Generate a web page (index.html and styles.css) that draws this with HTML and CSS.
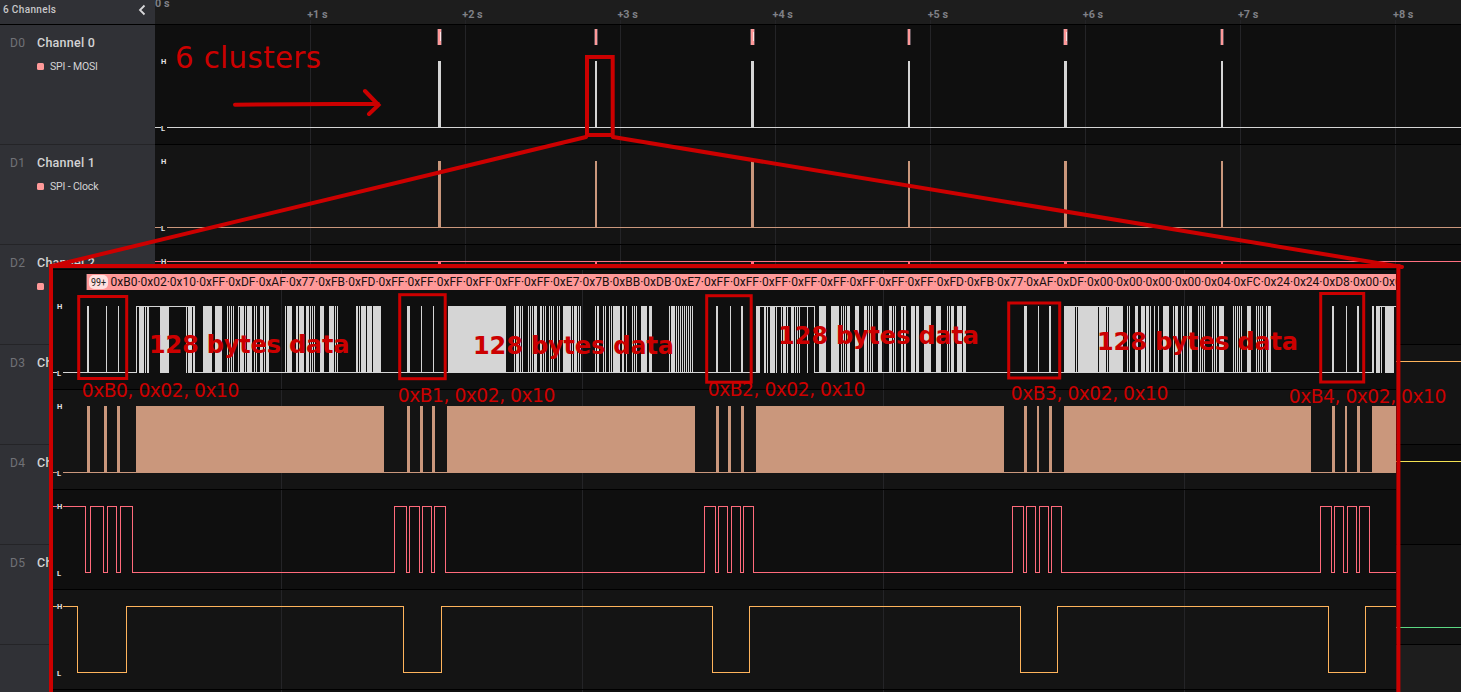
FILE: index.html
```html
<!DOCTYPE html>
<html lang="en">
<head>
<meta charset="utf-8">
<title>Logic capture</title>
<link rel="stylesheet" href="styles.css">
</head>
<body>
<div class="app">
  <aside class="sidebar">
    <header class="side-head"><span>6 Channels</span>
      <svg class="chevron" viewBox="0 0 8 12"><path d="M6.500 1.500 2 6l4.500 4.500"/></svg>
    </header>
    <section class="channel tall"><span class="id">D0</span><div><h2>Channel 0</h2><p><i></i>SPI - MOSI</p></div></section>
    <section class="channel"><span class="id">D1</span><div><h2>Channel 1</h2><p><i></i>SPI - Clock</p></div></section>
    <section class="channel"><span class="id">D2</span><div><h2>Channel 2</h2><p><i></i></p></div></section>
    <section class="channel"><span class="id">D3</span><div><h2>Channel 3</h2></div></section>
    <section class="channel"><span class="id">D4</span><div><h2>Channel 4</h2></div></section>
    <section class="channel"><span class="id">D5</span><div><h2>Channel 5</h2></div></section>
  </aside>
  <main class="plot">
    <div class="ruler"></div>
    <div class="lane tall"></div>
    <div class="lane alt"></div>
    <div class="lane"></div>
    <div class="lane alt"></div>
    <div class="lane"></div>
    <div class="lane alt"></div>
  </main>
  <svg class="overlay" viewBox="0 0 1461 692">
    <g id="overview"></g>
    <g id="inset">
      <rect class="dark" x="53" y="268" width="1343" height="424"/>
      <path class="light" d="M53 390H1396V489H53ZM53 590H1396V689H53Z"/>
      <path class="rule" d="M53 269.500H1396M53 389.500H1396M53 489.500H1396M53 589.500H1396M53 689.500H1396"/>
      <g id="insetGrid"></g>
      <rect class="tag" x="87" y="274" width="1309" height="16"/>
      <path class="tag-edge" d="M86.500 274V290"/>
      <rect class="count-bg" x="89" y="275" width="19" height="14" rx="5"/>
      <text class="count" x="91" y="285.500" textLength="15" lengthAdjust="spacingAndGlyphs">99+</text>
      <svg x="88" y="270" width="1308" height="24" viewBox="88 270 1308 24"><text class="bytes" id="bytes" x="110.500" y="286"></text></svg>
      <g id="signals"></g>
      <path class="enable" d="M53 506.500H85.500V572.500H90.500V506.500H103.500V572.500H107.500V506.500H116.500V572.500H120.500V506.500H132.500V572.500H394.500V506.500H406.500V572.500H409.500V506.500H419.500V572.500H422.500V506.500H431.500V572.500H434.500V506.500H445.500V572.500H704.500V506.500H715.500V572.500H718.500V506.500H727.500V572.500H731.500V506.500H740.500V572.500H743.500V506.500H753.500V572.500H1012.500V506.500H1023.500V572.500H1026.500V506.500H1035.500V572.500H1039.500V506.500H1048.500V572.500H1051.500V506.500H1061.500V572.500H1320.500V506.500H1331.500V572.500H1334.500V506.500H1343.500V572.500H1347.500V506.500H1356.500V572.500H1359.500V506.500H1369.500V572.500H1396"/>
      <path class="orange" d="M53 606.500H77.500V672.500H126.500V606.500H403.500V672.500H441.500V606.500H712.500V672.500H749.500V606.500H1020.500V672.500H1057.500V606.500H1328.500V672.500H1365.500V606.500H1396"/>
      <g id="levels"></g>
    </g>
    <g class="pen">
      <path d="M235 104.700 378 103.700M365 91 378.500 105 369 114"/>
      <rect x="587" y="57" width="25.700" height="78"/>
      <path d="M586 137 52 266M613 137 1402 267"/>
      <path d="M51 692V266H1398.400V692"/>
    </g>
    <g class="pen thin">
      <rect x="78.700" y="296.500" width="48" height="82"/>
      <rect x="399.700" y="294.700" width="45.500" height="84"/>
      <rect x="706.700" y="295.700" width="44.500" height="86.500"/>
      <rect x="1008.700" y="303" width="51" height="75"/>
      <rect x="1320.700" y="293.500" width="43" height="88.500"/>
    </g>
    <g class="note">
      <text class="title" x="175" y="68" textLength="146">6 clusters</text>
      <text class="data" x="149" y="353" textLength="200.500">128 bytes data</text>
      <text class="data" x="473" y="354" textLength="201">128 bytes data</text>
      <text class="data" x="778" y="344" textLength="201">128 bytes data</text>
      <text class="data" x="1097" y="350" textLength="201">128 bytes data</text>
      <text class="cmd" x="81.800" y="397.300" textLength="157.500">0xB0, 0x02, 0x10</text>
      <text class="cmd" x="397.800" y="402.300" textLength="157.500">0xB1, 0x02, 0x10</text>
      <text class="cmd" x="707.800" y="396.300" textLength="157.500">0xB2, 0x02, 0x10</text>
      <text class="cmd" x="1010.800" y="400.300" textLength="157.500">0xB3, 0x02, 0x10</text>
      <text class="cmd" x="1288.800" y="403.300" textLength="157.500">0xB4, 0x02, 0x10</text>
    </g>
  </svg>
</div>
<script src="waves.js"></script>
</body>
</html>
```
FILE: styles.css
```css
body { margin: 0; background: #1d1d1d; font-family: Roboto, sans-serif; overflow: hidden; }
.app { position: relative; display: flex; width: 1461px; height: 692px; overflow: hidden; }
.sidebar { width: 155px; background: #303136; color: #d3d3d4; }
.side-head { display: flex; justify-content: space-between; align-items: center; height: 25px; padding: 0 9px 5px 3px; box-sizing: border-box; border-bottom: 1px solid #000; font-size: 10px; font-weight: 500; letter-spacing: .35px; color: #c8c8ca; }
.chevron { width: 8px; height: 12px; fill: none; stroke: #d8d8da; stroke-width: 1.800; }
.channel { display: flex; box-sizing: border-box; height: 100px; padding: 10px 0 0 10px; border-bottom: 1px solid #242427; }
.channel.tall, .lane.tall { height: 120px; }
.id { width: 27px; font-size: 12px; line-height: 16px; letter-spacing: .3px; color: #707176; }
.channel h2 { margin: 0; font-size: 12.500px; line-height: 16px; font-weight: 500; letter-spacing: .25px; white-space: nowrap; }
.channel p { display: flex; align-items: center; margin: 9px 0 0; height: 14px; font-size: 10.500px; line-height: 14px; letter-spacing: -.15px; gap: 6px; white-space: nowrap; }
.channel i { width: 7px; height: 7px; margin-bottom: 1px; border-radius: 1.500px; background: #ff9999; }
.plot { flex: 1; }
.ruler { height: 25px; box-sizing: border-box; background: #1d1d1d; border-bottom: 1px solid #000; }
.lane { height: 100px; box-sizing: border-box; background: #0f0f0f; border-bottom: 1px solid #000; }
.lane.alt { background: #141414; }
.overlay { position: absolute; inset: 0; width: 1461px; height: 692px; }
.overlay rect, .rule { shape-rendering: crispEdges; }
.overlay .pen rect, .overlay .count-bg { shape-rendering: auto; }
.dark { fill: #0f0f0f; }
.light { fill: #141414; }
.rule { stroke: #000; }
.white { fill: #d5d5d5; }
.clock { fill: #ca977c; }
.clock-line { fill: #ca977c; }
.red { fill: #ff7080; }
.grid { fill: #242427; }
.amber { fill: #ffb45c; }
.yellow { fill: #f3e252; }
.green { fill: #5cd883; }
.tag { fill: #ff9999; }
.tag-edge { stroke: #66545a; fill: none; }
.edge { fill: #5e5056; }
.shine { fill: #ffe3e3; }
.count-bg { fill: #ffe0e0; }
.count { font-size: 10px; fill: #222; }
.bytes { font-size: 12px; fill: #170f0f; }
.time { font-size: 10.800px; font-weight: 700; fill: #7f8086; }
.level { font-size: 7.500px; font-weight: 700; fill: #e4e4e4; }
.enable, .orange { fill: none; stroke: #ff6b7b; shape-rendering: crispEdges; }
.orange { stroke: #ffb45c; }
.pen { fill: none; stroke: #cc0000; stroke-width: 4; stroke-linecap: round; }
.thin { stroke-width: 3; }
.note { fill: #cc0000; font-family: "DejaVu Sans", sans-serif; }
.title { font-size: 29.300px; }
.data { font-size: 24px; font-weight: 700; }
.cmd { font-size: 18.700px; }
```
FILE: waves.js
```js
const NS = 'http://www.w3.org/2000/svg';
const el = id => document.getElementById(id);
function rect(parent, cls, x, y, w, h) {
  const r = document.createElementNS(NS, 'rect');
  r.setAttribute('class', cls);
  r.setAttribute('x', x); r.setAttribute('y', y);
  r.setAttribute('width', w); r.setAttribute('height', h);
  parent.appendChild(r);
}
function text(parent, cls, x, y, value) {
  const t = document.createElementNS(NS, 'text');
  t.setAttribute('class', cls);
  t.setAttribute('x', x); t.setAttribute('y', y);
  t.textContent = value;
  parent.appendChild(t);
}
function level(parent, x, y, value, bg) {
  rect(parent, bg, x - 2, y - 5, 6, 9);
  text(parent, 'level', x - 2, y + 3, value);
}

const ov = el('overview');
for (let i = 1; i < 9; i++) rect(ov, 'grid', 155 + i * 155, 20, 1, 624);
rect(ov, 'rulebar', 155, 24, 1306, 1);
[144, 244, 344, 444, 544, 644].forEach(y => rect(ov, 'rulebar', 155, y, 1306, 1));
text(ov, 'time', 155, 7, '0 s');
for (let i = 1; i < 9; i++) text(ov, 'time', 152 + i * 155.14, 18, '+' + i + ' s');
rect(ov, 'white', 155, 127, 1306, 1);
rect(ov, 'clock-line', 155, 227, 1306, 1);
rect(ov, 'red', 155, 261, 1306, 1);
rect(ov, 'amber', 1396, 361, 65, 1);
rect(ov, 'yellow', 1396, 461, 65, 1);
rect(ov, 'green', 1396, 627, 65, 1);
[[438, 3], [595, 2], [751, 3], [908, 2], [1064, 3], [1221, 2]].forEach(([x, w]) => {
  rect(ov, 'edge', x - 1, 29, w + 2, 16);
  rect(ov, 'tag', x, 29, w, 16);
  if (w === 3) rect(ov, 'shine', x + 2, 32, 1, 9);
  rect(ov, 'white', x, 61, w, 66);
  rect(ov, 'clock', x, 161, w, 66);
  rect(ov, 'red', x, 261, w, 3);
});
level(ov, 163, 61, 'H', 'dark'); level(ov, 163, 128, 'L', 'dark');
level(ov, 163, 161, 'H', 'light'); level(ov, 163, 228, 'L', 'light');
level(ov, 163, 261, 'H', 'dark');

[281, 582, 883, 1184].forEach(x => {
  [[270, 119], [390, 99], [490, 99], [590, 99], [690, 2]].forEach(([y, h]) => rect(el('insetGrid'), 'grid', x, y, 1, h));
});
el('bytes').textContent = ('B0 02 10 FF DF AF 77 FB FD FF FF FF FF FF FF E7 7B BB DB E7 ' +
  'FF FF FF FF FF FF FF FF FD FB 77 AF DF 00 00 00 00 04 FC 24 24 D8 00 00')
  .split(' ').map(b => '0x' + b).join('·');

// MOSI pulses as "x" or "x:width"
const mosi = `87:2 106 118 136 139:5 145 147:2 160:9 186 188:4 193:2 203:9 215:7 227 229 231 233 238 240:4 245 247:5 254 256
260:3 264 266:3 285 287:5 296:2 299:5 306:3 310 312 314 320:4 329:5 335 337 356:2 359 361:5 367:5 373:8
407:3 421 433 448:58 514 516:3 520 522 528 530 532 534:3 540:2 543 545 549 551 553 557 559 563:8 572 574:3 578 580
595 597:2 603 605 609 611 613:7 622:2 626 632 634 636 641:6 649:3 669 671:4 676 678 680 682 684 686 688 690 692
716:2 730 741:2 756:4 764:2 767 770:5 776 781 783:3 787 791:3 795 797 799 807 814 819:7 831:8 841 843 845 847:3 855:4
864:3 868 870 872 878:4 889:3 893 895 901:2 904:2 911:4 916:3 924:7 936:5 947 949 951:3 957:5 963:3
1024:3 1038 1049:2 1064:59 1127 1129 1135:3 1141:4 1146:3 1150 1154 1158 1163:6 1173 1175:3 1181 1183 1187 1189:3
1198 1200 1202 1204 1212 1214 1216 1219:5 1233 1235 1237 1239 1241 1247:4 1256 1258 1260 1262 1266 1268:3
1332:2 1346 1357:2 1372:2 1376:4 1381 1385:9`;
const sig = el('signals');
mosi.split(/\s+/).forEach(p => {
  const [x, w = 1] = p.split(':').map(Number);
  rect(sig, 'white', x, 306, w, 67);
});
[1075, 1077, 1098, 1106, 1108].forEach(x => rect(sig, 'dark', x, 307, 1, 65));
[[136, 59], [238, 3], [756, 59], [901, 5], [1376, 20]].forEach(([x, w]) => rect(sig, 'white', x, 306, w, 1));
[[53, 84], [194, 254], [505, 252], [814, 251], [1122, 251]].forEach(([x, w]) => rect(sig, 'white', x, 372, w, 1));
[[87, 3], [104, 3], [117, 3], [136, 248], [407, 3], [420, 3], [432, 3], [447, 248], [716, 3], [728, 3], [741, 3],
  [756, 248], [1024, 3], [1037, 2], [1049, 3], [1064, 247], [1332, 3], [1345, 2], [1357, 3], [1372, 24]]
  .forEach(([x, w]) => rect(sig, 'clock', x, 406, w, 66));
rect(sig, 'clock-line', 53, 472, 1343, 1);
[306, 406, 506, 606].forEach((y, i) => {
  const bg = i % 2 ? 'light' : 'dark';
  level(el('levels'), 59, y, 'H', bg);
  level(el('levels'), 59, y + 67, 'L', bg);
});
```
